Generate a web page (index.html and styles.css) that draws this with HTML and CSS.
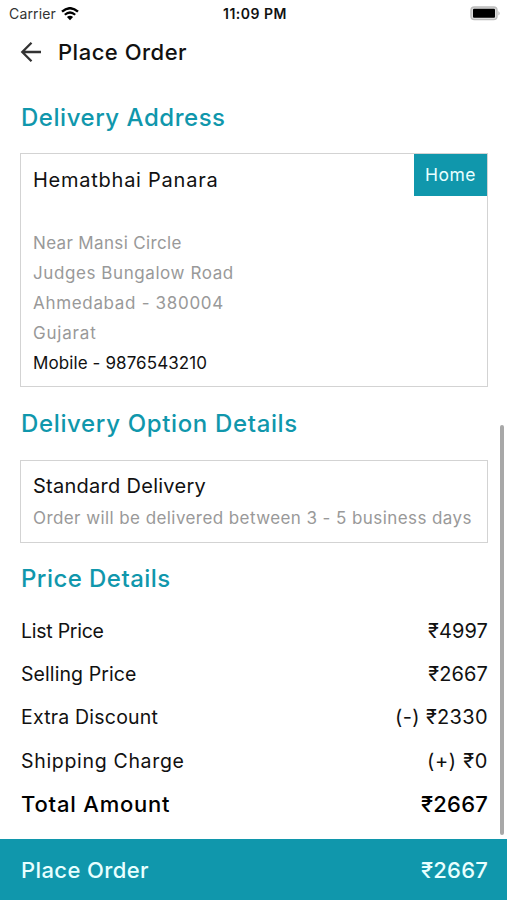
FILE: index.html
```html
<!DOCTYPE html>
<html lang="en">

<head>
  <meta charset="UTF-8">
  <meta name="viewport" content="width=device-width, initial-scale=1.0">
  <title>Place Order</title>
  <link rel="stylesheet" href="styles.css">
</head>

<body>
  <div class="status-bar">
    <div class="carrier">
      <span>Carrier</span>
      <svg class="wifi" width="18" height="14" viewBox="0 0 18 14">
        <path d="M1 4.7 Q9 -2.3 17 4.7" fill="none" stroke="#000" stroke-width="2.4" />
        <path d="M3.8 7.8 Q9 3.2 14.2 7.8" fill="none" stroke="#000" stroke-width="2.2" />
        <path d="M9 13.2 L5.9 10 Q9 7.4 12.1 10 Z" fill="#000" />
      </svg>
    </div>
    <span class="time">11:09 PM</span>
    <svg class="battery" width="31" height="15" viewBox="0 0 31 15">
      <rect x="1" y="1" width="26" height="12.6" rx="3.4" fill="#ddd" stroke="#bcbcbc" stroke-width="1.4" />
      <rect x="3" y="2.8" width="22" height="9" rx="1" fill="#000" />
      <path d="M28.5 5 Q30.7 7.3 28.5 9.6 Z" fill="#aaa" />
    </svg>
  </div>

  <header class="header">
    <svg class="back" width="22" height="22" viewBox="0 0 22 22">
      <path d="M21 11 H2 M11.5 1.8 L2.3 11 L11.5 20.2" fill="none" stroke="#333" stroke-width="2.3" />
    </svg>
    <h1>Place Order</h1>
  </header>

  <main class="content">
    <h2 class="title-address">Delivery Address</h2>
    <section class="card address">
      <span class="badge">Home</span>
      <h3 class="name">Hematbhai Panara</h3>
      <p class="line1">Near Mansi Circle</p>
      <p class="line2">Judges Bungalow Road</p>
      <p class="line3">Ahmedabad - 380004</p>
      <p class="line4">Gujarat</p>
      <p class="mobile">Mobile - 9876543210</p>
    </section>

    <h2 class="title-option">Delivery Option Details</h2>
    <section class="card option">
      <h3 class="standard">Standard Delivery</h3>
      <p class="note">Order will be delivered between 3 - 5 business days</p>
    </section>

    <h2 class="title-price">Price Details</h2>
    <div class="prices">
      <div class="row"><span class="label-list">List Price</span><span class="amount">₹4997</span></div>
      <div class="row"><span class="label-selling">Selling Price</span><span class="amount">₹2667</span></div>
      <div class="row"><span class="label-extra">Extra Discount</span><span class="amount minus">(-) ₹2330</span></div>
      <div class="row"><span class="label-shipping">Shipping Charge</span><span class="amount plus">(+) ₹0</span></div>
      <div class="row total"><span class="label-total">Total Amount</span><span class="sum">₹2667</span></div>
    </div>
    <div class="scrollbar"></div>
  </main>

  <footer class="footer">
    <span class="label-place">Place Order</span>
    <span class="sum">₹2667</span>
  </footer>
</body>

</html>
```
FILE: styles.css
```css
* {
  margin: 0;
  padding: 0;
  box-sizing: border-box;
}

body {
  display: flex;
  flex-direction: column;
  height: 900px;
  font-family: Inter, "Liberation Sans", sans-serif;
  background-color: white;
  color: #111;
  white-space: nowrap;
  overflow: hidden;
}

.status-bar {
  display: grid;
  grid-template-columns: 1fr auto 1fr;
  align-items: center;
  height: 27px;
  padding: 0 6px 0 9px;
  font-size: 14px;
}

.carrier {
  display: flex;
  align-items: center;
  gap: 5px;
  color: #333;
  letter-spacing: 0.15px;
}

.time {
  font-weight: 600;
  letter-spacing: 0.5px;
}

.battery {
  justify-self: end;
}

.header {
  display: flex;
  align-items: center;
  gap: 16px;
  height: 50px;
  padding-left: 20px;
}

h1 {
  font-size: 22px;
  font-weight: 500;
  letter-spacing: 0.5px;
}

.content {
  position: relative;
  height: 762px;
  padding: 21px 19px 0 20px;
}

h2 {
  height: 40px;
  line-height: 40px;
  padding-left: 1px;
  font-size: 24px;
  font-weight: 500;
  color: #1097ac;
}

.title-address {
  letter-spacing: 0.53px;
}

.title-option {
  letter-spacing: 0.65px;
}

.title-price {
  letter-spacing: 0.45px;
}

.card {
  position: relative;
  border: 1px solid #d3d3d3;
  padding-left: 12px;
}

.address {
  height: 234px;
  margin: 15px 0 17px;
  padding-top: 11px;
}

.badge {
  position: absolute;
  top: 0;
  right: 0;
  width: 73px;
  height: 42px;
  line-height: 42px;
  text-align: center;
  font-size: 17.5px;
  letter-spacing: 0.5px;
  color: #e8ffff;
  background-color: #1097ac;
}

h3 {
  height: 31px;
  line-height: 31px;
  font-size: 20px;
  font-weight: 400;
}

.name {
  margin-bottom: 32px;
  letter-spacing: 0.75px;
}

.standard {
  letter-spacing: 0.27px;
}

.card p {
  height: 30px;
  line-height: 30px;
  font-size: 17px;
  color: #999;
}

.line1 {
  letter-spacing: 0.35px;
}

.line2 {
  letter-spacing: 0.58px;
}

.line3 {
  letter-spacing: 0.68px;
}

.line4 {
  letter-spacing: 0.8px;
}

.card .mobile {
  letter-spacing: 0.1px;
  color: #111;
}

.option {
  height: 83px;
  margin: 16px 0;
  padding-top: 10px;
}

.option .note {
  margin-top: 1px;
  letter-spacing: 0.42px;
}

.prices {
  padding: 11px 0 0 1px;
}

.row {
  display: flex;
  justify-content: space-between;
  height: 43.2px;
  line-height: 43.2px;
  font-size: 19.5px;
}

.label-list {
  letter-spacing: -0.25px;
}

.label-selling {
  letter-spacing: 0.08px;
}

.label-extra {
  letter-spacing: 0.2px;
}

.label-shipping {
  letter-spacing: 0.68px;
}

.amount {
  font-size: 20px;
  letter-spacing: 0.1px;
}

.minus {
  letter-spacing: 0.35px;
}

.plus {
  letter-spacing: 0.7px;
}

.total {
  font-size: 22px;
  font-weight: 500;
  color: #000;
}

.label-total {
  letter-spacing: 0.8px;
}

.sum {
  letter-spacing: 0.2px;
}

.scrollbar {
  position: absolute;
  top: 348px;
  right: 3px;
  width: 4px;
  height: 410px;
  border-radius: 2px;
  background-color: #a8a8a8;
}

.footer {
  display: flex;
  justify-content: space-between;
  align-items: center;
  height: 61px;
  padding: 0 19px 0 21px;
  font-size: 22px;
  font-weight: 500;
  color: #e8ffff;
  background-color: #1097ac;
}

.label-place {
  letter-spacing: 0.4px;
}
```
